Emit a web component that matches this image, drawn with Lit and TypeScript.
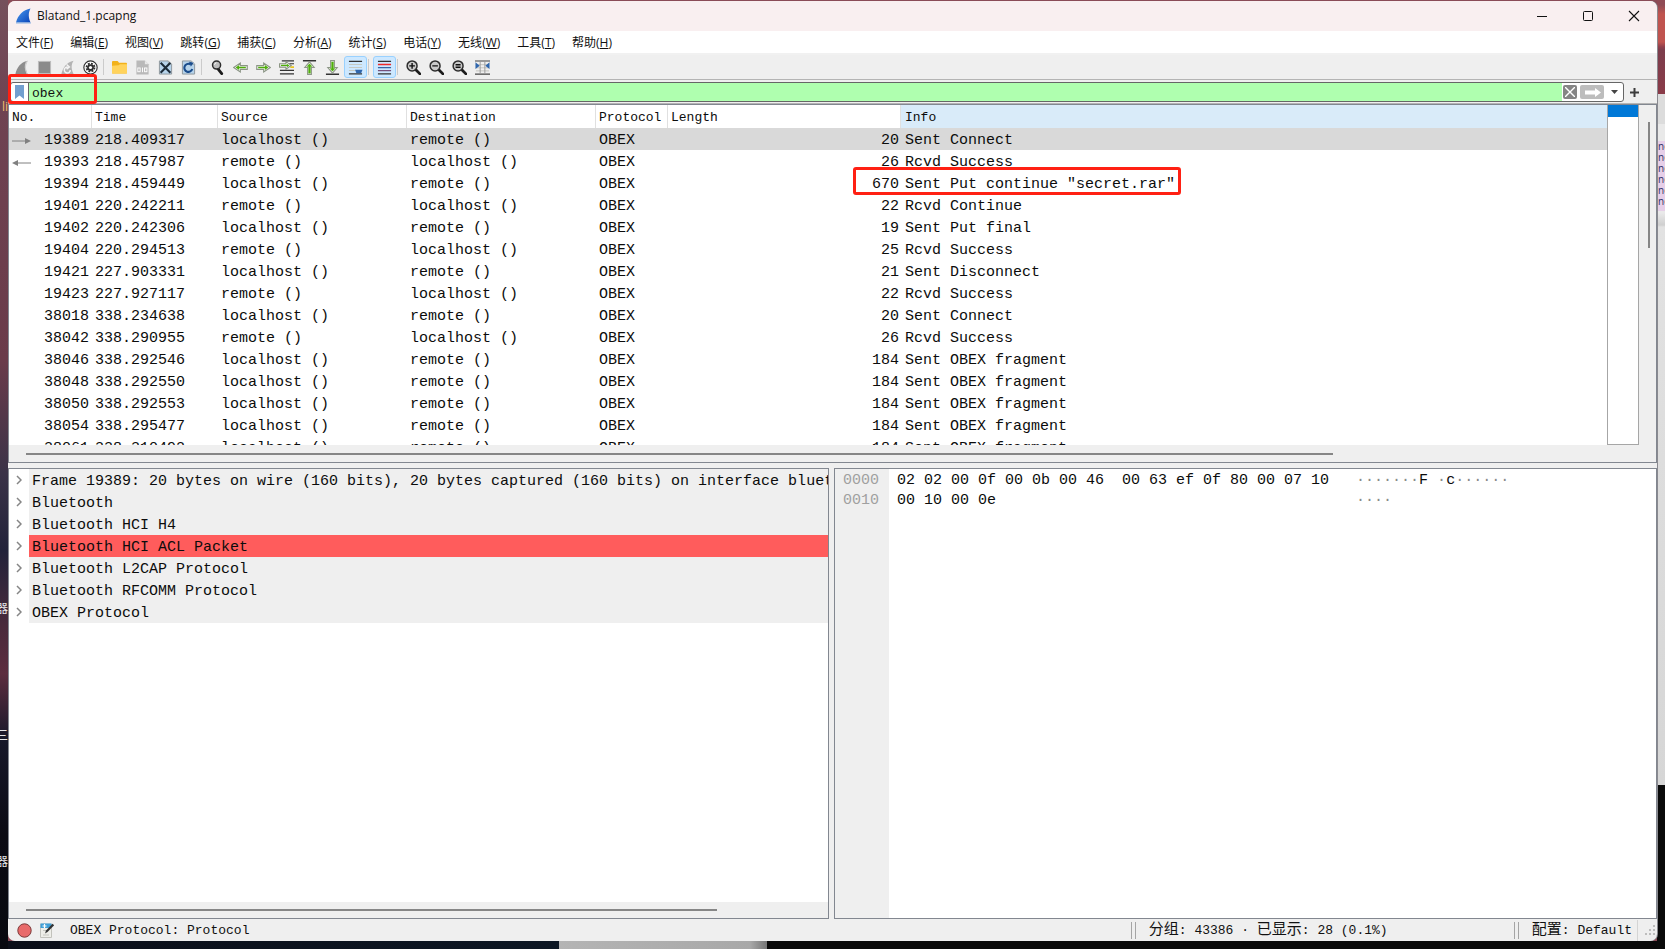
import { LitElement, html, css, svg } from "lit";
import { customElement, property } from "lit/decorators.js";
import { classMap } from "lit/directives/class-map.js";

const finPath = "M1.5 15C3 8 7 2.500 14.500 .8C11.500 5 12 10 14.500 15Z";

const arrowRight = svg`<path d="M.8 6h7.400V3.200L15.200 8l-7 4.800V10H.8z" fill="#fff" stroke="#8a9484" stroke-width="1.200"/><path d="M2.300 7.200h7.200V5.300L13.200 8l-3.700 2.700V8.800H2.300z" fill="#4fae0c"/>`;

const magnifier = (inner: unknown) => svg`<path d="M10.200 10.200l4.600 4.600" stroke="#1c1c1c" stroke-width="3" stroke-linecap="round"/><circle cx="6.500" cy="6.300" r="5.300" fill="#c9c9c9" stroke="#2e2e2e" stroke-width="1.600"/><g stroke="#111" stroke-width="1.500" fill="none">${inner}</g>`;

const sheet = svg`<path d="M1.500 1h9.500l3.500 3.500V15H1.500z" fill="#b6d3ea" stroke="#8d959b"/><path d="M11 1v3.500h3.500" fill="#e8eef2" stroke="#8d959b" stroke-width=".8"/>`;

const icons: Record<string, unknown> = {
  start: svg`<path d=${finPath} fill="#8d8d8d"/><path d="M12.800 1.600C10.800 5 11 10 13.400 15H14.800C12.400 10 12 6 14.800 1z" fill="#cfcfcf"/>`,
  stop: svg`<rect x="1.500" y="1.500" width="13" height="13" fill="#8b8b8b" stroke="#bdbdbd"/>`,
  restart: svg`<path d=${finPath} fill="#b3b3b3"/><path d="M8 7.500a3.200 3.200 0 1 0 3 3.300M7 4.800l3 2.600-3 2.400" fill="none" stroke="#f4f4f4" stroke-width="1.600"/>`,
  options: svg`<circle cx="8" cy="8" r="7.100" fill="#fff" stroke="#2f2f2f" stroke-width="1.200"/><circle cx="8" cy="8" r="4.200" fill="none" stroke="#2f2f2f" stroke-width="2" stroke-dasharray="2 1.300"/><circle cx="8" cy="8" r="3.600" fill="#2f2f2f"/><circle cx="8" cy="8" r="1.700" fill="#fff"/>`,
  open: svg`<path d="M0 2q0-1 1-1h5l1.500 2H15q1 0 1 1v9.500q0 1-1 1H1q-1 0-1-1z" fill="#f2b21b"/><path d="M0 6l7-.500L8.500 4.500H16v9q0 1-1 1H1q-1 0-1-1z" fill="#ffd35c"/>`,
  save: svg`<path d="M1.500 .5h9l4 4v11h-13z" fill="#b9b9b9"/><path d="M10.500 .5v4h4z" fill="#e8e8e8"/><g fill="none" stroke="#fff" stroke-width="1"><rect x="3" y="8.500" width="2.500" height="4"/><path d="M8 8v5"/><rect x="10.200" y="8.500" width="2.500" height="4"/></g>`,
  close: svg`${sheet}<path d="M2.800 3l10.400 10.500M13.200 3L2.800 13.500" stroke="#1b2b38" stroke-width="2.200"/>`,
  reload: svg`${sheet}<path d="M12 9.500a4.300 4.300 0 1 1-2.300-5" fill="none" stroke="#1a4c8c" stroke-width="2.200"/><path d="M8.500 1.800l5 1.200-3 4z" fill="#1a4c8c"/>`,
  find: svg`<path d="M8.500 9.500l4 5" stroke="#1c1c1c" stroke-width="3" stroke-linecap="round"/><circle cx="7" cy="5.400" r="4.300" fill="#bdbdbd" stroke="#2e2e2e" stroke-width="1.600"/><path d="M4.800 5a2.400 2.400 0 0 1 2-2" stroke="#fff" fill="none"/>`,
  back: svg`<g transform="matrix(-1 0 0 1 16 0)">${arrowRight}</g>`,
  forward: arrowRight,
  goto: svg`<path d="M3 1h13M11 4h5M1 11h15M1 14.800h15" stroke="#333" stroke-width="1.300"/><path d="M12 7.600h4" stroke="#e8c520" stroke-width="2"/><path d="M.6 4h6.800V1.800L13 5.800 7.400 9.800V7.600H.6z" fill="#fff" stroke="#87917f" stroke-width="1.100"/><path d="M2 5.100h6.400V4l2.800 1.800-2.800 1.800V6.500H2z" fill="#4fae0c"/>`,
  first: svg`<path d="M1 .8h14" stroke="#333" stroke-width="1.400"/><path d="M8 2L13 8h-3v7.300H6V8H3z" fill="#fff" stroke="#8d9687" stroke-width="1.200"/><path d="M8 4l2.700 3H9v7H7V7H5.300z" fill="#4fae0c" stroke="#4fae0c" stroke-width=".4"/>`,
  last: svg`<path d="M1 15.200h14" stroke="#333" stroke-width="1.400"/><path d="M8 14L13 8h-3V.7H6V8H3z" fill="#fff" stroke="#8d9687" stroke-width="1.200"/><path d="M8 12l2.700-3H9V2H7v7H5.300z" fill="#4fae0c" stroke="#4fae0c" stroke-width=".4"/>`,
  autoscroll: svg`<path d="M1 1.500h14M1 14.800h14" stroke="#333" stroke-width="1.300"/><path d="M1 4.800h14M1 8h14M1 11.200h7" stroke="#c5c9c2" stroke-width="1.300"/><path d="M7.500 10.500h8l-1.500 3.700h-5z" fill="#2f66ad"/>`,
  colorize: svg`<path d="M1 1.500h14M1 14.800h14" stroke="#333" stroke-width="1.300"/><path d="M1 4.800h14" stroke="#ef2929" stroke-width="1.400"/><path d="M1 8.100h14" stroke="#3465a4" stroke-width="1.400"/><path d="M1 11.400h14" stroke="#75507b" stroke-width="1.400"/>`,
  zoomin: magnifier(svg`<path d="M3.500 6.300h6M6.500 3.300v6"/>`),
  zoomout: magnifier(svg`<path d="M3.500 6.300h6"/>`),
  zoomreset: magnifier(svg`<path d="M3.800 5h5.400M3.800 7.700h5.400"/>`),
  resize: svg`<path d="M0 1h16M0 15h16" stroke="#444" stroke-width="1.200"/><path d="M1 5h14M1 8.300h14M1 11.600h14" stroke="#c2c2bd"/><path d="M5.500 1v14M10.500 1v14" stroke="#999"/><path d="M.5 2.500L5 6 .5 9.500zM15.500 2.500L11 6l4.500 3.500z" fill="#2f66ad"/>`,
};

const toolbar: [string, string][][] = [
  [["start", "Start capture"], ["stop", "Stop capture"], ["restart", "Restart capture"], ["options", "Capture options"]],
  [["open", "Open file"], ["save", "Save file"], ["close", "Close file"], ["reload", "Reload file"]],
  [["find", "Find packet"], ["back", "Previous packet"], ["forward", "Next packet"], ["goto", "Go to packet"], ["first", "First packet"], ["last", "Last packet"], ["autoscroll", "Auto scroll"]],
  [["colorize", "Colorize packets"]],
  [["zoomin", "Zoom in"], ["zoomout", "Zoom out"], ["zoomreset", "Normal size"], ["resize", "Resize columns"]],
];
const pressed = new Set(["autoscroll", "colorize"]);

const menus = [["文件", "F"], ["编辑", "E"], ["视图", "V"], ["跳转", "G"], ["捕获", "C"], ["分析", "A"], ["统计", "S"], ["电话", "Y"], ["无线", "W"], ["工具", "T"], ["帮助", "H"]];

const L = "localhost ()";
const R = "remote ()";
type Packet = [string, string, string, string, string, string];
const packets: Packet[] = [
  ["19389", "218.409317", L, R, "20", "Sent Connect"],
  ["19393", "218.457987", R, L, "26", "Rcvd Success"],
  ["19394", "218.459449", L, R, "670", 'Sent Put continue "secret.rar"'],
  ["19401", "220.242211", R, L, "22", "Rcvd Continue"],
  ["19402", "220.242306", L, R, "19", "Sent Put final"],
  ["19404", "220.294513", R, L, "25", "Rcvd Success"],
  ["19421", "227.903331", L, R, "21", "Sent Disconnect"],
  ["19423", "227.927117", R, L, "22", "Rcvd Success"],
  ["38018", "338.234638", L, R, "20", "Sent Connect"],
  ["38042", "338.290955", R, L, "26", "Rcvd Success"],
  ["38046", "338.292546", L, R, "184", "Sent OBEX fragment"],
  ["38048", "338.292550", L, R, "184", "Sent OBEX fragment"],
  ["38050", "338.292553", L, R, "184", "Sent OBEX fragment"],
  ["38054", "338.295477", L, R, "184", "Sent OBEX fragment"],
  ["38061", "338.310492", L, R, "184", "Sent OBEX fragment"],
];

const layers = [
  "Frame 19389: 20 bytes on wire (160 bits), 20 bytes captured (160 bits) on interface bluet",
  "Bluetooth",
  "Bluetooth HCI H4",
  "Bluetooth HCI ACL Packet",
  "Bluetooth L2CAP Protocol",
  "Bluetooth RFCOMM Protocol",
  "OBEX Protocol",
];

const shared = css`
  * { box-sizing: border-box; }
  button {
    border: 0; padding: 0; margin: 0; background: none; color: inherit; font: inherit;
    display: flex; align-items: center; justify-content: center;
  }
  svg { display: block; flex: none; }
`;

@customElement("tool-bar")
class ToolBar extends LitElement {
  static styles = [shared, css`
    :host { display: flex; align-items: center; height: 25px; padding-left: 2px; background: #efefef; border-bottom: 1px solid #b4b4b4; }
    button { width: 23px; height: 22px; border: 1px solid transparent; border-radius: 3px; }
    .pressed { background: #cde8ff; border-color: #99d1ff; }
    .rule { width: 6px; height: 16px; background: linear-gradient(90deg, transparent 1px, #cbcbcb 1px, #cbcbcb 2px, transparent 2px); }
  `];
  render() {
    return toolbar.map((group, i) => html`
      ${i ? html`<span class="rule"></span>` : ""}
      ${group.map(([id, label]) => html`
        <button class=${classMap({ pressed: pressed.has(id) })} aria-label=${label}>
          <svg width="15" height="15" viewBox="0 0 16 16">${icons[id]}</svg>
        </button>`)}`);
  }
}

@customElement("packet-list")
class PacketList extends LitElement {
  @property({ type: Number }) selected = 0;

  static styles = [shared, css`
    :host { box-sizing: border-box; display: grid; grid-template: minmax(0, 1fr) 17px / minmax(0, 1fr) 32px 17px; background: #efefef; border: 1px solid #828790; }
    .rows { overflow: hidden; background: #fff; }
    table { width: 100%; table-layout: fixed; border-collapse: separate; border-spacing: 0; font: 15px/19px "Liberation Mono", monospace; color: #0c0c0c; }
    th { height: 23px; padding: 2px 3px 0; text-align: left; font: 13px/20px "Liberation Mono", monospace; border-right: 1px solid #e0e0e0; }
    td { height: 22px; padding: 3px 3px 0; white-space: pre; }
    th:last-child, td:last-child { padding-left: 4px; }
    th:last-child { background: #d9ebf9; border-right: 0; }
    .c-no { width: 83px; } .c-time { width: 126px; } .c-addr { width: 189px; } .c-proto { width: 72px; } .c-len { width: 233px; }
    .no { display: flex; align-items: center; justify-content: flex-end; }
    .no svg { margin-right: auto; }
    .num { text-align: right; padding-right: 2px; }
    .selected td { background: #d9d9d9; }
    .mark { position: relative; }
    .mark::before { content: ""; position: absolute; box-sizing: border-box; left: -52px; top: -8px; width: 328px; height: 28px; border: 3px solid #ff2013; border-radius: 3px; z-index: 1; }
    .map { border: 1px solid #a6a6a6; border-top: 0; background: linear-gradient(#0078d7 12px, #fff 12px); }
    .vbar { display: flex; flex-direction: column; align-items: center; padding: 17px 0 17px 2px; }
    .vthumb { width: 2px; height: 41%; background: #868686; }
    .hbar { grid-column: 1 / -1; display: flex; align-items: center; padding: 0 17px; }
    .hthumb { width: 81%; height: 2px; background: #868686; }
  `];

  private arrow(i: number) {
    if (i === 0) return html`<svg width="20" height="8" viewBox="0 0 20 8"><path d="M0 4h13" stroke="#808080"/><path d="M13 1l6 3-6 3z" fill="#808080"/></svg>`;
    if (i === 1) return html`<svg width="20" height="8" viewBox="0 0 20 8"><path d="M5 4h14" stroke="#808080"/><path d="M6 1L0 4l6 3z" fill="#808080"/></svg>`;
    return "";
  }

  render() {
    return html`
      <div class="rows"><table>
        <thead><tr>
          <th class="c-no">No.</th><th class="c-time">Time</th><th class="c-addr">Source</th><th class="c-addr">Destination</th>
          <th class="c-proto">Protocol</th><th class="c-len">Length</th><th>Info</th>
        </tr></thead>
        <tbody>${packets.map(([no, time, src, dst, len, info], i) => html`
          <tr class=${classMap({ selected: i === this.selected })}>
            <td><div class="no">${this.arrow(i)}${no}</div></td><td>${time}</td><td>${src}</td><td>${dst}</td>
            <td>OBEX</td><td class="num">${len}</td><td><div class=${classMap({ mark: info.includes("secret") })}>${info}</div></td>
          </tr>`)}
        </tbody>
      </table></div>
      <div class="map"></div>
      <div class="vbar"><div class="vthumb"></div></div>
      <div class="hbar"><div class="hthumb"></div></div>`;
  }
}

@customElement("packet-details")
class PacketDetails extends LitElement {
  static styles = [shared, css`
    :host { display: flex; flex-direction: column; min-width: 0; background: #fff; border: 1px solid #828790; }
    ul { flex: 1; margin: 0; padding: 0; list-style: none; overflow: hidden; font: 15px/19px "Liberation Mono", monospace; color: #0c0c0c; }
    li { display: grid; grid-template-columns: 20px minmax(0, 1fr); height: 22px; }
    .name { padding: 3px 0 0 3px; background: #efefef; white-space: pre; overflow: hidden; }
    .warn { background: #ff5c5c; }
    .hbar { display: flex; align-items: center; height: 16px; padding: 0 17px; background: #efefef; }
    .hthumb { width: 88%; height: 2px; background: #868686; }
  `];
  render() {
    return html`
      <ul>${layers.map((name) => html`
        <li>
          <button aria-label="Expand"><svg width="6" height="10" viewBox="0 0 6 10"><path d="M1 1l4 4-4 4" fill="none" stroke="#858585" stroke-width="1.500"/></svg></button>
          <span class=${classMap({ name: true, warn: name.includes("ACL") })}>${name}</span>
        </li>`)}</ul>
      <div class="hbar"><div class="hthumb"></div></div>`;
  }
}

@customElement("packet-bytes")
class PacketBytes extends LitElement {
  static styles = [shared, css`
    :host { display: flex; min-width: 0; background: #fff; border: 1px solid #828790; overflow: hidden; }
    pre { margin: 0; padding: 2px 8px; font: 15px/20px "Liberation Mono", monospace; color: #0c0c0c; }
    .offsets { width: 54px; background: #efefef; color: #a0a0a0; }
    .dot { color: #8a8a8a; }
  `];
  render() {
    const dots = (n: number) => html`<span class="dot">${"·".repeat(n)}</span>`;
    return html`
      <pre class="offsets">0000\n0010</pre>
      <pre>02 02 00 0f 00 0b 00 46  00 63 ef 0f 80 00 07 10   ${dots(7)}F ${dots(1)}c${dots(6)}${"\n"}00 10 00 0e${" ".repeat(40)}${dots(4)}</pre>`;
  }
}

@customElement("app-root")
class AppRoot extends LitElement {
  static styles = [shared, css`
    :host {
      display: grid; grid-template: 1px minmax(0, 1fr) 8px / 8px minmax(0, 1fr) 8px; height: 100vh; overflow: hidden;
      font: 12px/22px "Open Sans", "Noto Sans CJK SC", sans-serif; color: #111;
      background: #8a4b57;
    }
    .left, .right { grid-row: 1 / -1; overflow: hidden; display: flex; flex-direction: column; }
    .left { grid-column: 1; background: linear-gradient(#75505c, #6f4352 11%, #6a3b4a 38%, #3a3348 50%, #22233a 58%, #4a2a3c 66%, #5c2d3f 71%, #17182a 78%, #0b0b14 88%, #08090f); color: #e6e6ea; justify-content: space-between; padding: 96px 0 76px; }
    .left span { display: flex; justify-content: flex-end; white-space: nowrap; }
    .left .near { color: #f0c070; margin-bottom: 376px; }
    .right { grid-column: 3; background: linear-gradient(#8f4b55 5px, #c0544f 14px, #c0544f 42px, #8f3f4c 47px, #7c3d4c 50px, #8a3b48 94px, #dcdcdc 94px, #dcdcdc 124px, #e9e9e9 124px, #e9e9e9 213px, #cfcfcf 225px, #e2e2e2 227px, #d6d6d6 785px, #0a0a0a 785px); padding-top: 141px; }
    .right ul { margin: 0; padding: 0 0 4px 1px; list-style: none; background: #e6cfe8; color: #2c2f68; font-size: 10px; line-height: 11px; }
    .bottom { grid-area: 3 / 2; background: linear-gradient(90deg, #0b0e18, #0d1724 33.400%, #b4b4b4 33.400%, #a8a8a8 45%, #777 46%, #090909 46%); }
    .window { grid-area: 2 / 2; display: flex; flex-direction: column; min-width: 0; background: #efefef; border-radius: 7px; overflow: hidden; box-shadow: 1px 0 0 #8a8a90; position: relative; z-index: 1; }
    .title { display: flex; align-items: center; height: 30px; background: #f9eff0; padding-left: 7px; }
    .title h1 { flex: 1; margin: 0 0 0 5px; font: inherit; }
    .title button { width: 46px; height: 30px; }
    .menu { display: flex; gap: 1px; height: 24px; background: #fff; border-bottom: 2px solid #f1f1f1; }
    .menu button { padding: 2px 8px 0; height: 22px; }
    .filter { position: relative; display: flex; align-items: center; height: 24px; padding: 1px 18px 0 2px; gap: 6px; border-bottom: 1px solid #b4b4b4; }
    .field { flex: 1; display: flex; align-items: center; height: 20px; border: 1px solid #666; border-radius: 3px; background: #fff; overflow: hidden; }
    .bookmark { width: 18px; height: 18px; border-right: 1px solid #666; }
    .field input { flex: 1; min-width: 0; height: 18px; border: 0; outline: 0; padding: 2px 3px 0; background: #afffaf; font: 13px/16px "Liberation Mono", monospace; color: #111; }
    .clear { width: 14px; height: 14px; margin: 0 3px 0 1px; background: #858585; border-radius: 2px; }
    .apply { width: 24px; height: 14px; background: #bdbdbd; border-radius: 2px; }
    .recent { width: 17px; height: 18px; margin-left: 2px; }
    .mark { position: absolute; left: 0; top: -6px; width: 89px; height: 30px; border: 3px solid #ff2013; border-radius: 3px; pointer-events: none; }
    main { flex: 1; min-height: 0; display: flex; flex-direction: column; gap: 5px; }
    packet-list { flex: 357 1 0; min-height: 0; }
    .lower { flex: 450 1 0; min-height: 0; display: grid; grid-template-columns: 821fr 823fr; gap: 5px; }
    footer { display: flex; align-items: center; height: 22px; padding: 0 2px 0 9px; font: 13px/20px "Liberation Mono", "Noto Sans CJK SC", monospace; white-space: pre; }
    footer .note { margin: 0 15px 0 8px; }
    footer .state { flex: 1; padding-top: 2px; }
    .cell { display: flex; align-items: center; padding-top: 1px; }
    .cell::before { content: ""; box-sizing: border-box; width: 5px; height: 17px; margin-right: 13px; border: solid #a5a5a5; border-width: 0 1px; }
    .count { width: 383px; }
    .profile { padding-right: 5px; margin-right: 7px; border-right: 1px solid #d4d4d4; }
    .cjk { font-size: 15px; }
  `];

  render() {
    return html`
      <div class="left"><span class="near">li</span><span>器</span><span>三</span><span>器</span></div>
      <div class="right"><ul>${Array.from({ length: 6 }, () => html`<li>nc</li>`)}</ul></div>
      <div class="bottom"></div>
      <div class="window">
        <header class="title">
          <svg width="17" height="16" viewBox="0 0 17 16"><defs><linearGradient id="fin" x2="1" y2="1"><stop stop-color="#4b9bf0"/><stop offset="1" stop-color="#0a44b8"/></linearGradient></defs><path d="M1 14.500C3 7 8 2 15.500 .5C13 5 13.500 10 15.500 14.500Z" fill="url(#fin)"/><path d="M1 15h15" stroke="#8fb4e0"/></svg>
          <h1>Blatand_1.pcapng</h1>
          <button aria-label="Minimize"><svg width="12" height="12" viewBox="0 0 12 12"><path d="M1 6.500h10" stroke="#111"/></svg></button>
          <button aria-label="Maximize"><svg width="12" height="12" viewBox="0 0 12 12"><rect x="1.500" y="1.500" width="9" height="9" rx="1" fill="none" stroke="#111"/></svg></button>
          <button aria-label="Close"><svg width="12" height="12" viewBox="0 0 12 12"><path d="M1 1l10 10M11 1L1 11" stroke="#111" stroke-width="1.100"/></svg></button>
        </header>
        <nav class="menu">${menus.map(([name, key]) => html`<button>${name}(<u>${key}</u>)</button>`)}</nav>
        <tool-bar></tool-bar>
        <div class="filter">
          <div class="field">
            <button class="bookmark" aria-label="Filter bookmarks"><svg width="9" height="14" viewBox="0 0 9 14"><path d="M0 0h9v14L4.500 10.500 0 14z" fill="#729fcf"/></svg></button>
            <input aria-label="Display filter" value="obex">
            <button class="clear" aria-label="Clear filter"><svg width="10" height="10" viewBox="0 0 10 10"><path d="M0 0l10 10M10 0L0 10" stroke="#fff" stroke-width="1.400"/></svg></button>
            <button class="apply" aria-label="Apply filter"><svg width="17" height="9" viewBox="0 0 17 9"><path d="M1 2.500h10V0l6 4.500L11 9V6.500H1z" fill="#fff"/></svg></button>
            <button class="recent" aria-label="Recent filters"><svg width="7" height="4" viewBox="0 0 7 4"><path d="M0 0h7L3.500 4z" fill="#444"/></svg></button>
          </div>
          <button aria-label="Add filter button"><svg width="9" height="9" viewBox="0 0 9 9"><path d="M0 4.500h9M4.500 0v9" stroke="#3c3c3c" stroke-width="2"/></svg></button>
          <span class="mark"></span>
        </div>
        <main>
          <packet-list></packet-list>
          <div class="lower"><packet-details></packet-details><packet-bytes></packet-bytes></div>
        </main>
        <footer>
          <svg width="15" height="15" viewBox="0 0 15 15"><circle cx="7.500" cy="7.500" r="6.700" fill="#e86a6a" stroke="#7d3a3a"/></svg>
          <svg class="note" width="15" height="15" viewBox="0 0 15 15"><path d="M.5 1h11v13.500H.5z" fill="#eeeee9" stroke="#c2c2bc"/><path d="M.5 .5h11V5H.5z" fill="#3f9fd8"/><path d="M4.500 1v4M2.500 3h4" stroke="#fff" stroke-width="1.200"/><path d="M3 7.500h4M3 12h6" stroke="#c6c6c0"/><path d="M5 10.500l1-3L12.500 .8l1.700 1.500L7.500 9z" fill="#333"/></svg>
          <span class="state">OBEX Protocol: Protocol</span>
          <span class="cell count"><span><span class="cjk">分组</span>: 43386 · <span class="cjk">已显示</span>: 28 (0.1%)</span></span>
          <span class="cell profile"><span><span class="cjk">配置</span>: Default</span></span>
          <svg width="10" height="10" viewBox="0 0 10 10"><path d="M8 0h2v2H8zM4 4h2v2H4zM8 4h2v2H8zM0 8h2v2H0zM4 8h2v2H4zM8 8h2v2H8z" fill="#bdbdbd"/></svg>
        </footer>
      </div>`;
  }
}
